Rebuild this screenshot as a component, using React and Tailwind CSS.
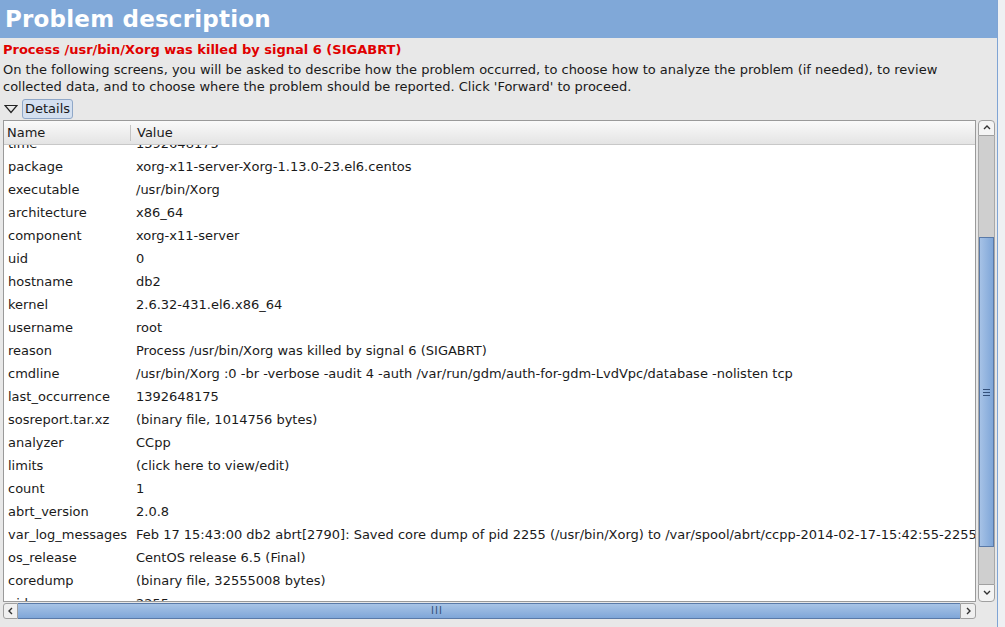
const rows = [
  ["time", "1392648175"],
  ["package", "xorg-x11-server-Xorg-1.13.0-23.el6.centos"],
  ["executable", "/usr/bin/Xorg"],
  ["architecture", "x86_64"],
  ["component", "xorg-x11-server"],
  ["uid", "0"],
  ["hostname", "db2"],
  ["kernel", "2.6.32-431.el6.x86_64"],
  ["username", "root"],
  ["reason", "Process /usr/bin/Xorg was killed by signal 6 (SIGABRT)"],
  ["cmdline", "/usr/bin/Xorg :0 -br -verbose -audit 4 -auth /var/run/gdm/auth-for-gdm-LvdVpc/database -nolisten tcp"],
  ["last_occurrence", "1392648175"],
  ["sosreport.tar.xz", "(binary file, 1014756 bytes)"],
  ["analyzer", "CCpp"],
  ["limits", "(click here to view/edit)"],
  ["count", "1"],
  ["abrt_version", "2.0.8"],
  ["var_log_messages", "Feb 17 15:43:00 db2 abrt[2790]: Saved core dump of pid 2255 (/usr/bin/Xorg) to /var/spool/abrt/ccpp-2014-02-17-15:42:55-2255 (32555008 bytes)"],
  ["os_release", "CentOS release 6.5 (Final)"],
  ["coredump", "(binary file, 32555008 bytes)"],
  ["pid", "2255"],
];

function Arrow({ dir }) {
  const d = {
    up: "M2 6 L5 3 L8 6",
    down: "M2 3 L5 6 L8 3",
    left: "M6 2 L3 5 L6 8",
    right: "M4 2 L7 5 L4 8",
  }[dir];
  return (
    <svg width="10" height="10" viewBox="0 0 10 10">
      <path d={d} fill="none" stroke="#333" strokeWidth="1.4" />
    </svg>
  );
}

export default function App() {
  return (
    <div className="w-[1005px] h-[627px] flex bg-[#e8e8e8] overflow-hidden font-['DejaVu_Sans',sans-serif] text-[#1a1a1a]">
      <div className="w-[997px] flex flex-col">
        <div className="h-[38px] bg-[#80a8d8] flex items-center pl-[5px]">
          <h1 className="text-white font-bold text-[23px] leading-none tracking-[0.2px]">Problem description</h1>
        </div>

        <div className="pl-[3px] pt-[3px] text-[13px]">
          <p className="text-[#e00000] font-bold leading-[17px]">Process /usr/bin/Xorg was killed by signal 6 (SIGABRT)</p>
          <p className="leading-[17px] mt-[3px] pr-[40px]">
            On the following screens, you will be asked to describe how the problem occurred, to choose how to analyze the problem (if needed), to review collected data, and to choose where the problem should be reported. Click 'Forward' to proceed.
          </p>
        </div>

        <div className="flex items-center h-[21px] mt-[3px] pl-[4px]">
          <svg width="14" height="10" viewBox="0 0 14 10" className="mr-[4px]">
            <path d="M1 1.5 L13 1.5 L7 8.5 Z" fill="none" stroke="#222" strokeWidth="1.2" />
          </svg>
          <div className="h-[20px] px-[2px] border border-[#90a8c8] rounded-[3px] bg-[#d4e0f0] text-[13px] leading-[18px]">Details</div>
        </div>

        <div className="flex mt-[1px] pl-[3px] text-[13px]">
          <div className="w-[973px] flex flex-col">
            <div className="h-[482px] border border-[#9a9a9a] bg-white flex flex-col overflow-hidden">
              <div className="h-[24px] shrink-0 flex items-center bg-gradient-to-b from-[#fafafa] to-[#e4e4e4] border-b border-[#c8c8c8] relative z-10">
                <div className="w-[127px] pl-[3px] border-r border-[#c4c4c4] h-[16px] leading-[16px]">Name</div>
                <div className="pl-[6px]">Value</div>
              </div>
              <div className="flex-1 overflow-hidden">
                <div className="-mt-[13px]">
                  {rows.map(([k, v]) => (
                    <div key={k} className="h-[23px] flex items-center whitespace-nowrap">
                      <div className="w-[132px] shrink-0 pl-[4px]">{k}</div>
                      <div>{v}</div>
                    </div>
                  ))}
                </div>
              </div>
            </div>
            <div className="h-[16px] flex mt-[1px]">
              <div className="w-[15px] h-[16px] border border-[#a0a0a0] rounded-l-[3px] bg-[#f0f0f0] flex items-center justify-center">
                <Arrow dir="left" />
              </div>
              <div className="flex-1 h-[16px] border-y border-[#5a7aa8] bg-gradient-to-b from-[#a8c4e6] to-[#7fa6d8] flex items-center justify-center pr-[104px]">
                <span className="text-[10px] leading-none text-[#34507a] tracking-[1px]">III</span>
              </div>
              <div className="w-[16px] h-[16px] border border-[#a0a0a0] rounded-r-[3px] bg-[#f0f0f0] flex items-center justify-center">
                <Arrow dir="right" />
              </div>
            </div>
          </div>

          <div className="ml-[2px] w-[17px] h-[482px] flex flex-col">
            <div className="h-[16px] border border-[#a0a0a0] rounded-t-[4px] bg-[#f4f4f4] flex items-center justify-center">
              <Arrow dir="up" />
            </div>
            <div className="flex-1 flex flex-col bg-[#cfcfcf] border-x border-[#a8a8a8]">
              <div className="h-[101px]" />
              <div className="h-[310px] bg-gradient-to-r from-[#a6c2e6] to-[#7fa6d8] border border-[#5a7aa8] flex flex-col items-center justify-center gap-[2px]">
                <div className="w-[7px] h-px bg-[#34507a]" />
                <div className="w-[7px] h-px bg-[#34507a]" />
                <div className="w-[7px] h-px bg-[#34507a]" />
              </div>
              <div className="flex-1" />
            </div>
            <div className="h-[18px] border border-[#a0a0a0] rounded-b-[4px] bg-[#f4f4f4] flex items-center justify-center">
              <Arrow dir="down" />
            </div>
          </div>
        </div>
      </div>
      <div className="w-px bg-[#7fa4d4]" />
      <div className="flex-1 bg-[#eef0f3]" />
    </div>
  );
}
